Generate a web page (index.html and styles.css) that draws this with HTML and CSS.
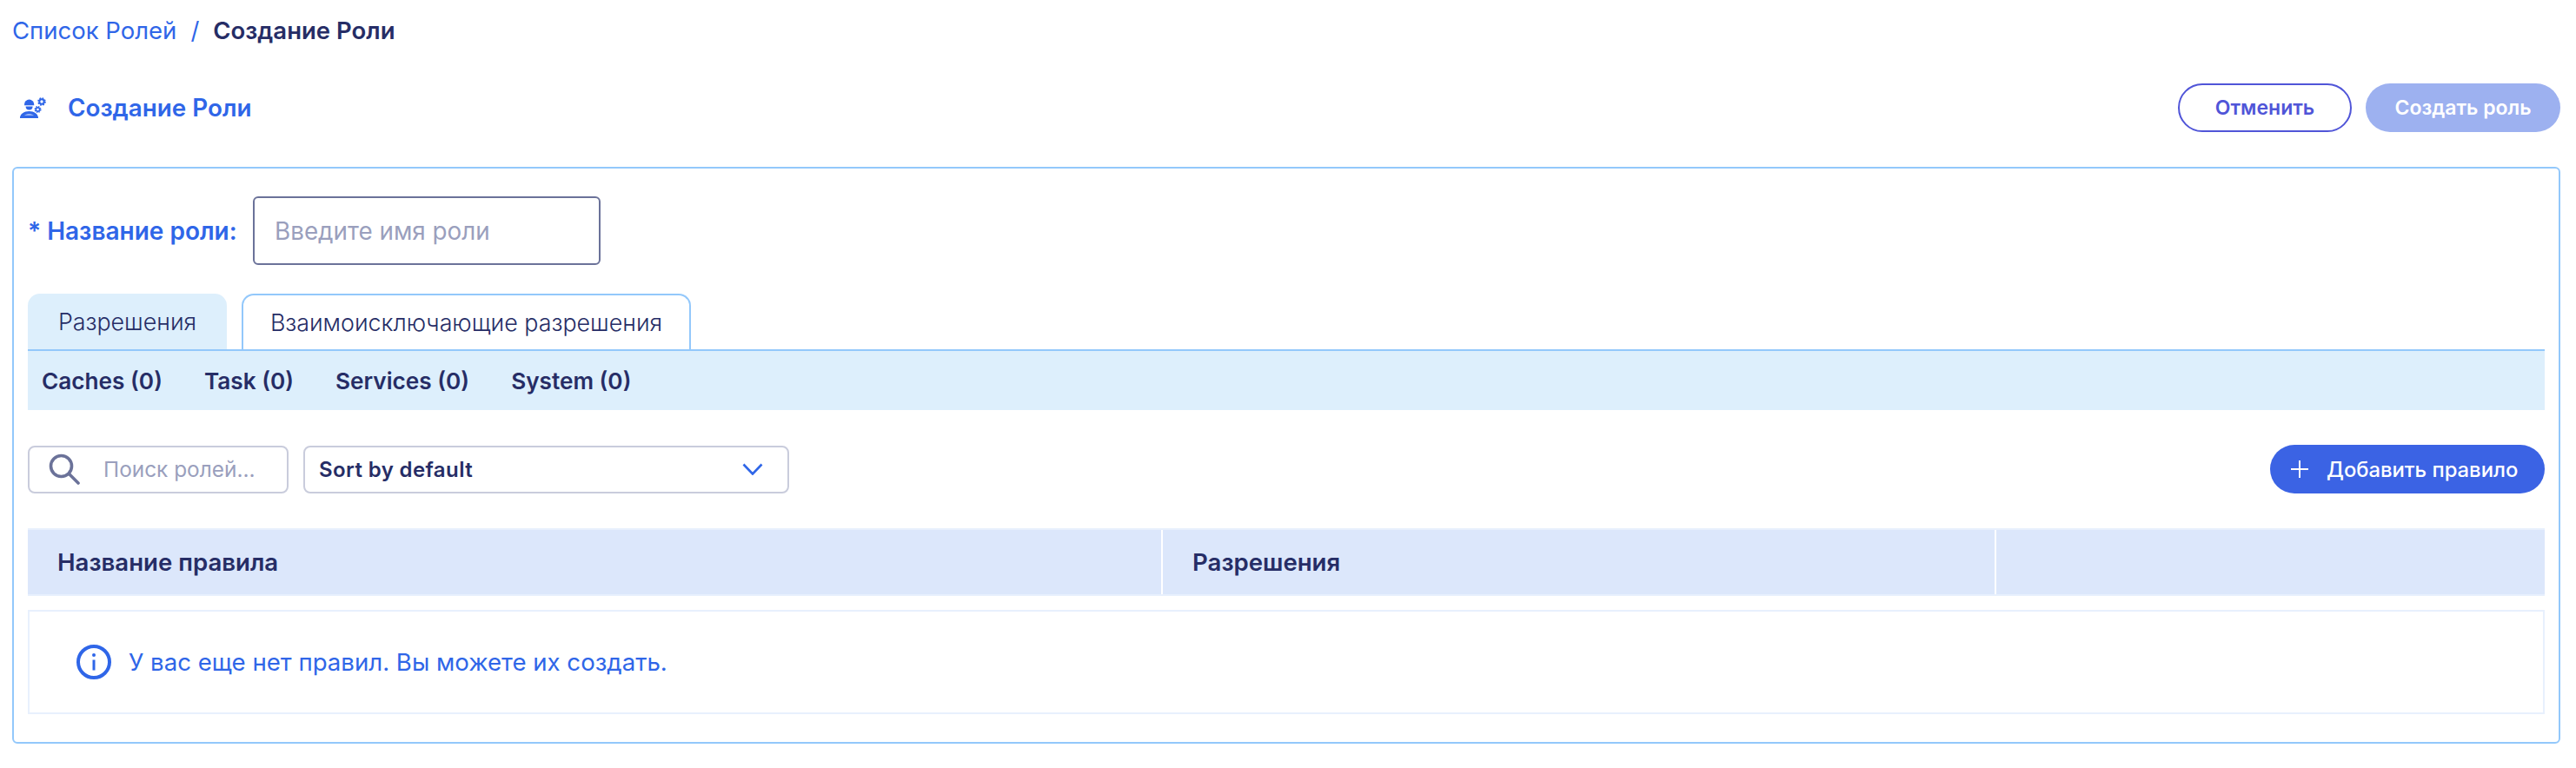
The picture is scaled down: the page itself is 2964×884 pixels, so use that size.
FILE: index.html
```html
<!DOCTYPE html>
<html lang="ru">
<head>
<meta charset="utf-8">
<title>Создание Роли</title>
<link rel="stylesheet" href="styles.css">
</head>
<body>
<div class="page">
  <nav class="crumbs"><a class="crumb-link">Список Ролей</a><span class="crumb-sep">/</span><span class="crumb-current">Создание Роли</span></nav>
  <header class="head">
    <div class="head-title">
      <svg class="role-icon" viewBox="0 0 30 24" width="30" height="24"><g fill="#2f66e8"><path d="M5 8.200a5.600 5.600 0 0 1 11.200 0v1H5z"/><path d="M6.600 10.400h8a4 4 0 0 1-8 0z"/><path d="M0 24c0-5 4.700-8 10.500-8S21 19 21 24h-3.200c-.6-3-3.400-4.400-7.300-4.400S3.800 21 3.200 24z"/><path d="M1.500 20.500h18l1.500 3.500H0z"/></g><g fill="none" stroke="#2f66e8"><circle cx="25" cy="5" r="2.700" stroke-width="2"/><circle cx="25" cy="5" r="4" stroke-width="1.600" stroke-dasharray="1.800 1.350"/><circle cx="20.500" cy="14" r="2.100" stroke-width="1.600"/><circle cx="20.500" cy="14" r="3.300" stroke-width="1.400" stroke-dasharray="1.500 1.100"/></g></svg>
      <h1 class="title">Создание Роли</h1>
    </div>
    <div class="head-actions">
      <button class="btn btn-outline">Отменить</button>
      <button class="btn btn-disabled">Создать роль</button>
    </div>
  </header>
  <main class="card">
    <div class="name-row">
      <label class="name-label">* Название роли:</label>
      <div class="name-input">Введите имя роли</div>
    </div>
    <div class="tabs">
      <div class="tab tab-active">Разрешения</div>
      <div class="tab tab-idle">Взаимоисключающие разрешения</div>
    </div>
    <div class="cats">
      <span class="cat">Caches (0)</span>
      <span class="cat">Task (0)</span>
      <span class="cat">Services (0)</span>
      <span class="cat">System (0)</span>
    </div>
    <div class="tools">
      <div class="search">
        <svg class="search-icon" viewBox="0 0 36 36" width="36" height="36"><circle cx="14.500" cy="14.500" r="12" fill="none" stroke="#6b7299" stroke-width="3.600"/><path d="M23.500 23.500 34 34" stroke="#6b7299" stroke-width="3.600" stroke-linecap="round"/></svg>
        <span class="search-text">Поиск ролей...</span>
      </div>
      <div class="sort">
        <span class="sort-text">Sort by default</span>
        <svg class="chev" viewBox="0 0 24 14" width="24" height="14"><path d="M1.500 1.500 12 12.500 22.500 1.500" fill="none" stroke="#2f66e8" stroke-width="2.600"/></svg>
      </div>
      <button class="btn-add">
        <svg class="plus" viewBox="0 0 20 20" width="20" height="20"><path d="M10 0v20M0 10h20" stroke="#fff" stroke-width="2"/></svg>
        Добавить правило
      </button>
    </div>
    <div class="thead">
      <div class="th th-name">Название правила</div>
      <div class="th th-perm">Разрешения</div>
      <div class="th th-rest"></div>
    </div>
    <div class="empty">
      <svg class="info" viewBox="0 0 40 40" width="40" height="40"><circle cx="20" cy="20" r="18" fill="none" stroke="#2f66e8" stroke-width="4"/><path d="M20 17.500v12" stroke="#2f66e8" stroke-width="3"/><circle cx="20" cy="12" r="2" fill="#2f66e8"/></svg>
      <span class="empty-text">У вас еще нет правил. Вы можете их создать.</span>
    </div>
  </main>
</div>
</body>
</html>
```
FILE: styles.css
```css
* { box-sizing: border-box; }
html, body { margin: 0; background: #fff; }
body { font-family: Inter, "Noto Sans", sans-serif; color: #262d66; }
.page { padding: 14px 18px 0 14px; }
.crumbs { height: 42px; display: flex; align-items: center; font-size: 27.500px; }
.crumb-link { color: #2f66e8; }
.crumb-sep { color: #2f66e8; margin: 0 16px 0 16px; }
.crumb-current { font-weight: 600; }
.head { height: 56px; margin-top: 40px; display: flex; justify-content: space-between; align-items: center; }
.head-title { display: flex; align-items: center; padding-left: 9px; }
.role-icon { display: block; }
.title { margin: 0 0 0 25px; font-size: 27.800px; font-weight: 600; color: #2f66e8; }
.head-actions { display: flex; gap: 16px; }
.btn { height: 56px; border-radius: 28px; font: 600 23px Inter, sans-serif; padding: 0; }
.btn-outline { width: 200px; background: #fff; border: 2px solid #5055d8; color: #5055d8; }
.btn-disabled { width: 224px; background: #9db1f0; border: 0; color: #fff; }
.card { margin-top: 40px; height: 664px; border: 2px solid #93c8fb; border-radius: 6px; padding: 32px 16px; }
.name-row { display: flex; align-items: center; height: 79px; }
.name-label { width: 259px; font-size: 28px; font-weight: 600; color: #2f66e8; }
.name-input { width: 400px; height: 79px; border: 2px solid #6b7299; border-radius: 6px; padding-left: 23px; display: flex; align-items: center; font-size: 27.800px; color: #9a9fbd; }
.tabs { display: flex; gap: 17px; margin-top: 33px; height: 64px; }
.tab { display: flex; align-items: center; justify-content: center; font-size: 26.800px; font-weight: 300; border-radius: 14px 14px 0 0; }
.tab-active { width: 229px; background: #ddeffc; }
.tab-idle { width: 517px; border: 2px solid #93c8fb; border-bottom: 0; }
.cats { height: 70px; background: #ddeffc; border-top: 2px solid #93c8fb; display: flex; align-items: center; padding-left: 16px; gap: 48px; font-size: 26.200px; font-weight: 600; }
.tools { display: flex; align-items: center; gap: 17px; margin-top: 40px; height: 56px; }
.search { width: 300px; height: 55px; border: 2px solid #c9ccdc; border-radius: 8px; display: flex; align-items: center; padding-left: 22px; }
.search-icon { display: block; flex: none; }
.search-text { margin-left: 27px; font-size: 24.400px; color: #9a9fbd; white-space: nowrap; }
.sort { width: 559px; height: 55px; border: 2px solid #c9ccdc; border-radius: 8px; display: flex; align-items: center; justify-content: space-between; padding: 0 28px 0 16px; font-size: 24px; letter-spacing: .4px; font-weight: 600; }
.chev { display: block; }
.btn-add { margin-left: auto; width: 316px; height: 56px; border: 0; border-radius: 28px; background: #3b63e4; color: #fff; display: flex; align-items: center; padding: 0 0 0 24px; gap: 21px; font: 500 23.800px Inter, sans-serif; white-space: nowrap; }
.plus { display: block; flex: none; }
.thead { display: flex; margin-top: 40px; height: 78px; border: 2px solid #e8f0fd; border-right: 0; border-left: 0; background: #dce7fb; }
.th { display: flex; align-items: center; font-size: 27.600px; font-weight: 600; padding-left: 34px; }
.th-name { width: 1306px; border-right: 2px solid #fff; }
.th-perm { width: 959px; border-right: 2px solid #fff; }
.th-rest { flex: 1; }
.empty { margin-top: 16px; height: 120px; border: 2px solid #e8f0fd; display: flex; align-items: center; padding-left: 54px; gap: 20px; }
.info { display: block; flex: none; }
.empty-text { font-size: 27.600px; color: #2f66e8; }
```
